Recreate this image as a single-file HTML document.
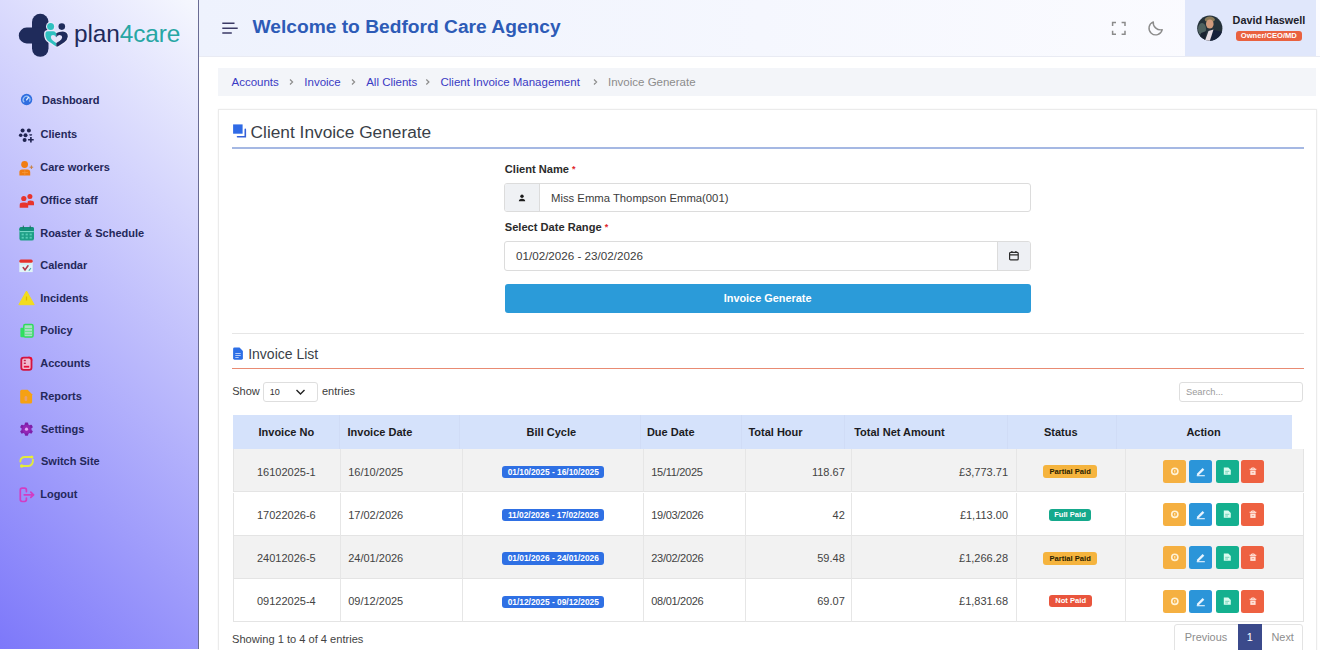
<!DOCTYPE html>
<html><head><meta charset="utf-8">
<style>
*{box-sizing:border-box;margin:0;padding:0}
html,body{width:1320px;height:650px;overflow:hidden;background:#fff;font-family:"Liberation Sans",sans-serif;position:relative}
.a{position:absolute}
.t{position:absolute;line-height:1;white-space:nowrap}
#side{left:0;top:0;width:199px;height:649px;background:linear-gradient(43.3deg,rgb(125,120,250) 0%,rgb(246,248,254) 100%);border-right:1px solid #6a6c94}
.nav{font-size:11px;font-weight:bold;color:#24285a}
#hdr{left:199px;top:0;width:1121px;height:57px;background:linear-gradient(90deg,#eef2fd,#fcfcff);border-bottom:1px solid #e9ebf3}
#prof{left:1185px;top:0;width:131px;height:56px;background:#e0e7fb}
#bc{left:217.5px;top:68.2px;width:1098px;height:27.6px;background:#f3f5f9}
.bcl{font-size:11.5px;color:#3a3ac4}
.chev{font-size:11px;color:#8a8a8a}
#card{left:218px;top:109px;width:1099px;height:560px;border:1px solid #ebebeb;background:#fff;box-shadow:0 0 2px rgba(0,0,0,0.05)}
.lbl{font-size:11.1px;font-weight:bold;color:#2b2b2b}
.req{color:#e0262b;font-size:9px;position:relative;top:-1px}
.inp{border:1px solid #dcdcdc;border-radius:3px;background:#fff}
.th{font-size:11px;font-weight:bold;color:#1b1b22}
.td{font-size:11px;color:#434343}
.bdg{border-radius:3px;color:#fff;font-weight:bold;text-align:center;line-height:12.5px}
.btn{border-radius:2.5px;width:23px;height:23px}
</style></head><body>
<!-- SIDEBAR -->
<div id="side" class="a"></div>
<svg class="a" style="left:0;top:0" width="199" height="70" viewBox="0 0 199 70">
 <rect x="32" y="13.8" width="16.5" height="43" rx="8.2" fill="#1f2b5b"/>
 <rect x="18.8" y="27.6" width="30" height="15.8" rx="7.9" fill="#1f2b5b"/>
 <defs><clipPath id="hl"><rect x="40" y="20" width="16.3" height="30"/></clipPath><clipPath id="hr"><rect x="56.3" y="20" width="16" height="30"/></clipPath></defs>
 <path id="ht" d="M45.4,33.6 Q45.4,31.3 47.8,31.3 L53.3,31.3 Q55.4,31.3 56.1,33.3 Q58.8,31.4 62.8,31.4 Q67.8,31.6 67.8,36.6 Q67.6,39.8 64.3,42.2 L58.6,46 Q57,47 55.4,46 L49.2,41.8 Q45.4,39 45.4,35.2 Z" fill="#e9e8fc" stroke="#e9e8fc" stroke-width="2.6"/>
 <g clip-path="url(#hl)"><path d="M45.4,33.6 Q45.4,31.3 47.8,31.3 L53.3,31.3 Q55.4,31.3 56.1,33.3 Q58.8,31.4 62.8,31.4 Q67.8,31.6 67.8,36.6 Q67.6,39.8 64.3,42.2 L58.6,46 Q57,47 55.4,46 L49.2,41.8 Q45.4,39 45.4,35.2 Z" fill="#2fc0c0"/></g>
 <g clip-path="url(#hr)"><path d="M45.4,33.6 Q45.4,31.3 47.8,31.3 L53.3,31.3 Q55.4,31.3 56.1,33.3 Q58.8,31.4 62.8,31.4 Q67.8,31.6 67.8,36.6 Q67.6,39.8 64.3,42.2 L58.6,46 Q57,47 55.4,46 L49.2,41.8 Q45.4,39 45.4,35.2 Z" fill="#1f2b5b"/></g>
 <path d="M56.2,43.1 L53,40.8 Q50.8,39.2 50.8,37 Q50.9,34.9 53,34.9 Q55,34.9 56.2,37.2 Q57.6,34.9 59.8,34.9 Q62.2,35.1 62.2,37.3 Q62,39.4 59.6,40.9 Z" fill="#e6e4fb"/>
 <circle cx="50.6" cy="26.4" r="4.6" fill="#e9e8fc"/>
 <circle cx="50.6" cy="26.4" r="3.5" fill="#2fc0c0"/>
 <circle cx="61.8" cy="26.6" r="3.3" fill="#1f2b5b"/>
</svg>
<div class="t" style="left:74px;top:21.5px;font-size:24.4px;color:#1f2b5b;letter-spacing:-0.1px">plan<span style="color:#27a6a4">4care</span></div>

<!-- nav icons -->
<svg class="a" style="left:0;top:80px" width="40" height="440" viewBox="0 80 40 440">
 <!-- dashboard -->
 <circle cx="26.6" cy="99.5" r="5.7" fill="#2f6ee0"/>
 <path d="M24.2,102.2 A3.4,3.4 0 1 1 29.4,101.6" fill="none" stroke="#9cc3f6" stroke-width="1.2"/>
 <path d="M26.6,99.9 L28.4,97.5" stroke="#e0efff" stroke-width="1.3" stroke-linecap="round"/>
 <!-- clients -->
 <g fill="#1f2350">
  <circle cx="22.6" cy="130.4" r="2"/><circle cx="28.9" cy="130.4" r="2"/>
  <circle cx="20.7" cy="135.3" r="1.8"/><circle cx="25.5" cy="135.3" r="2"/><path d="M29.2,134.3 A1.5,1.5 0 0 0 32.2,134.3 Z"/>
  <circle cx="24.6" cy="139.9" r="2"/>
 </g>
 <path d="M30.9,136.9 V142.5 M28.1,139.7 H33.7" stroke="#1f2350" stroke-width="1.6"/>
 <!-- care workers -->
 <g fill="#f07d12">
  <circle cx="24.6" cy="164.5" r="3.4"/>
  <path d="M19.4,175.6 V172 Q19.4,169.4 22.2,169.4 H27.4 Q30.2,169.4 30.2,172 V175.6 Z"/>
 </g>
 <path d="M22,172.5 H28 M24.8,169.6 V175.5" stroke="#f59a40" stroke-width="0.7"/>
 <path d="M31.4,165.4 V169 M29.6,167.2 H33.2" stroke="#c88040" stroke-width="1"/>
 <!-- office staff -->
 <g fill="#e8342c">
  <circle cx="29.9" cy="196.4" r="2.5"/>
  <path d="M27.5,205.3 V202.6 Q27.5,200.4 30.3,200.4 Q34,200.4 34,202.8 V205.3 Z"/>
  <circle cx="23.8" cy="198.5" r="2.6"/>
  <path d="M19.7,207.8 V205 Q19.7,202.6 23,202.6 H25 Q28.2,202.6 28.2,205 V207.8 Z"/>
 </g>
 <!-- roaster -->
 <rect x="19.4" y="227" width="14.6" height="13.6" rx="2.2" fill="#1e9e86"/>
 <rect x="19.4" y="227" width="14.6" height="4" rx="1.8" fill="#13907a"/>
 <path d="M19.6,231.6 H33.8" stroke="#7fdccb" stroke-width="1"/>
 <path d="M23.3,225.6 V228.4 M30.2,225.6 V228.4" stroke="#2a6a60" stroke-width="1"/>
 <g fill="#56cdb4"><rect x="21.6" y="233.6" width="2.2" height="1.8"/><rect x="25.6" y="233.6" width="2.2" height="1.8"/><rect x="29.6" y="233.6" width="2.2" height="1.8"/><rect x="21.6" y="236.8" width="2.2" height="1.8"/><rect x="25.6" y="236.8" width="2.2" height="1.8"/><rect x="29.6" y="236.8" width="2.2" height="1.8"/></g>
 <!-- calendar -->
 <rect x="19.3" y="261.5" width="13.4" height="10.6" fill="#e2f5f8"/>
 <rect x="19.3" y="259.4" width="13.4" height="3.4" rx="1.5" fill="#e4322c"/>
 <path d="M23.2,267.6 L25,270 L28,265.8" fill="none" stroke="#b23a4a" stroke-width="1.6" stroke-linecap="round"/>
 <path d="M28.8,270.6 L31,268.2" stroke="#4aa8b0" stroke-width="1.1"/>
 <path d="M20.5,264 H31.5" stroke="#bfe6ee" stroke-width="0.8"/>
 <!-- incidents -->
 <path d="M26.5,291 L34.2,304.7 H18.9 Z" fill="#f2dc1e" stroke="#f2dc1e" stroke-width="1" stroke-linejoin="round"/>
 <path d="M26.5,296.5 V300.5" stroke="#e0b800" stroke-width="1.2"/>
 <!-- policy -->
 <rect x="20.4" y="327.8" width="4" height="9.4" rx="1" fill="#2fe060"/>
 <rect x="23.8" y="324.6" width="9.2" height="12.4" rx="1.3" fill="#a9e0c6" stroke="#2fdc5c" stroke-width="1.5"/>
 <path d="M24.5,328.5 H32.3 M24.5,331.4 H32.3 M24.5,334.3 H32.3" stroke="#59e27e" stroke-width="0.9"/>
 <!-- accounts -->
 <rect x="21.3" y="357.6" width="10.2" height="12.2" rx="2.4" fill="#f2b9cf" stroke="#d3133f" stroke-width="1.8"/>
 <path d="M28.2,356.8 H29.5 Q32.2,356.8 32.2,359.5 V361 Z" fill="#ee0a30"/>
 <g fill="#c5204a"><rect x="23.8" y="359.8" width="2" height="1.4"/><rect x="23.8" y="362.6" width="2" height="1.4"/></g>
 <rect x="23.8" y="365.8" width="5.4" height="1.8" fill="#e8103a"/>
 <!-- reports -->
 <path d="M21.8,389.7 H27.6 L32.1,394.3 V402 Q32.1,403.6 30.5,403.6 H21.8 Q20.2,403.6 20.2,402 V391.3 Q20.2,389.7 21.8,389.7 Z" fill="#f5a114"/>
 <rect x="24.6" y="396" width="2.6" height="5" rx="1.3" fill="#e8a070"/>
 <!-- settings -->
 <g transform="translate(26.5,429.2)">
  <circle r="5" fill="#8e22b0"/>
  <g fill="#7e1fa8"><rect x="-1.7" y="-6.6" width="3.4" height="13.2" rx="0.8"/><rect x="-1.7" y="-6.6" width="3.4" height="13.2" rx="0.8" transform="rotate(60)"/><rect x="-1.7" y="-6.6" width="3.4" height="13.2" rx="0.8" transform="rotate(120)"/></g>
  <circle r="4.2" fill="#9326b6"/>
  <circle r="1.6" fill="#e2a6fa"/>
 </g>
 <!-- switch site -->
 <g fill="none" stroke="#e2ea3e" stroke-width="1.9" stroke-linecap="round">
  <path d="M20.4,461.6 Q20.4,457 25,457 H31.6"/>
  <path d="M33,459.6 Q33,466 28.4,466 H21.8"/>
 </g>
 <circle cx="31.8" cy="457" r="1.6" fill="#e8f030"/><circle cx="21.7" cy="466" r="1.7" fill="#e8f030"/>
 <!-- logout -->
 <g fill="none" stroke="#d23cc4" stroke-width="1.7" stroke-linecap="round" stroke-linejoin="round">
  <path d="M26.4,491.6 V490.2 Q26.4,488.2 24.5,488.2 H22.2 Q20.3,488.2 20.3,490.2 V499.6 Q20.3,501.5 22.2,501.5 H24.5 Q26.4,501.5 26.4,499.6 V498"/>
  <path d="M24.2,494.8 H33.4 M30.8,492.2 L33.6,494.8 L30.8,497.4"/>
 </g>
</svg>

<div class="t nav" style="left:42px;top:94.6px">Dashboard</div>
<div class="t nav" style="left:40.5px;top:129.2px">Clients</div>
<div class="t nav" style="left:40.2px;top:162.3px">Care workers</div>
<div class="t nav" style="left:40.2px;top:195px">Office staff</div>
<div class="t nav" style="left:40.2px;top:227.7px">Roaster &amp; Schedule</div>
<div class="t nav" style="left:40.2px;top:260.1px">Calendar</div>
<div class="t nav" style="left:40.2px;top:292.8px">Incidents</div>
<div class="t nav" style="left:40.2px;top:325.2px">Policy</div>
<div class="t nav" style="left:40.2px;top:357.8px">Accounts</div>
<div class="t nav" style="left:40.2px;top:390.8px">Reports</div>
<div class="t nav" style="left:41px;top:423.5px">Settings</div>
<div class="t nav" style="left:41px;top:455.9px">Switch Site</div>
<div class="t nav" style="left:40.2px;top:488.6px">Logout</div>
<!-- HEADER -->
<div id="hdr" class="a"></div>
<svg class="a" style="left:220px;top:20px" width="20" height="16" viewBox="220 20 20 16">
 <path d="M222.3,23.2 H234.5 M222.3,28.2 H237.7 M222.3,33 H231.8" stroke="#3b3a66" stroke-width="1.6"/>
</svg>
<div class="t" style="left:252.5px;top:17.2px;font-size:19.2px;font-weight:bold;color:#2d5bb7">Welcome to Bedford Care Agency</div>
<svg class="a" style="left:1108px;top:18px" width="60" height="20" viewBox="1108 18 60 20">
 <path d="M1112.6,26 V22.6 H1116 M1121.6,22.6 H1125 V26 M1125,30.8 V34.2 H1121.6 M1116,34.2 H1112.6 V30.8" fill="none" stroke="#8b8b8b" stroke-width="1.5"/>
 <path d="M1153.3,21.9 A6.7,6.7 0 1 0 1162.2,29.8 C1157,30.6 1152.6,26.5 1153.3,21.9 Z" fill="none" stroke="#8b8b8b" stroke-width="1.4" stroke-linejoin="round"/>
</svg>
<div id="prof" class="a"></div>
<svg class="a" style="left:1196px;top:14px" width="28" height="28" viewBox="1196 14 28 28">
 <defs><clipPath id="cc"><circle cx="1209.8" cy="28.2" r="12.6"/></clipPath></defs>
 <circle cx="1209.8" cy="28.2" r="12.6" fill="#25323a"/>
 <g clip-path="url(#cc)">
  <ellipse cx="1202" cy="29" rx="4" ry="6" fill="#5a6e6a" opacity="0.8"/>
  <ellipse cx="1209.8" cy="19.5" rx="5" ry="3" fill="#8a7a58"/>
  <ellipse cx="1209.8" cy="24" rx="3.8" ry="4.6" fill="#d09a7c"/>
  <path d="M1211,29.5 L1223,32 L1223,42 L1208,42 Z" fill="#17213a"/>
  <path d="M1204.5,42 L1208.5,31 L1213.5,29.5 L1209.5,42 Z" fill="#e6dce2"/>
  <path d="M1198,42 L1201,33 L1206.5,31 L1204.5,42 Z" fill="#1a2230"/>
 </g>
</svg>
<div class="t" style="left:1232.6px;top:15.3px;font-size:10.8px;font-weight:bold;color:#1d1d2a">David Haswell</div>
<div class="a bdg" style="left:1235.6px;top:30.8px;width:66.4px;height:10.6px;background:#e9613f;font-size:7.6px;line-height:10.6px">Owner/CEO/MD</div>

<!-- BREADCRUMB -->
<div id="bc" class="a"></div>
<div class="t bcl" style="left:231.5px;top:76.9px">Accounts</div>
<div class="t bcl" style="left:304.3px;top:76.9px">Invoice</div>
<div class="t bcl" style="left:366.2px;top:76.9px">All Clients</div>
<div class="t bcl" style="left:440.5px;top:76.9px">Client Invoice Management</div>
<div class="t bcl" style="left:608px;top:76.9px;color:#8c8c8c">Invoice Generate</div>
<svg class="a" style="left:280px;top:70px" width="330" height="24" viewBox="280 70 330 24">
 <path d="M290,79.5 L292.6,82 L290,84.5 M352,79.5 L354.6,82 L352,84.5 M426.3,79.5 L428.9,82 L426.3,84.5 M594,79.5 L596.6,82 L594,84.5" fill="none" stroke="#8d8d8d" stroke-width="1.2"/>
</svg>
<!-- CARD -->
<div id="card" class="a"></div>
<svg class="a" style="left:232px;top:122px" width="16" height="17" viewBox="232 122 16 17">
 <rect x="233.1" y="124.4" width="9.5" height="9.3" fill="#2f6ae6"/>
 <path d="M245.3,129.4 V136.8 H237.5" fill="none" stroke="#3560d8" stroke-width="1.6" stroke-linecap="round"/>
</svg>
<div class="t" style="left:250.6px;top:123.9px;font-size:17.3px;color:#3a3f48">Client Invoice Generate</div>
<div class="a" style="left:232px;top:147px;width:1072px;height:2px;background:#a5b8e3"></div>

<div class="t lbl" style="left:504.8px;top:163.5px">Client Name <span class="req">*</span></div>
<div class="a inp" style="left:504.2px;top:183.3px;width:526.4px;height:29px"></div>
<div class="a" style="left:505.2px;top:184.3px;width:34.4px;height:27px;background:#eff1f4;border-right:1px solid #dcdcdc;border-radius:2px 0 0 2px"></div>
<svg class="a" style="left:517px;top:193px" width="10" height="10" viewBox="0 0 10 10">
 <circle cx="5" cy="3.2" r="1.7" fill="#1d1d1d"/>
 <path d="M1.8,8.2 Q1.8,5.7 5,5.7 Q8.2,5.7 8.2,8.2 Z" fill="#1d1d1d"/>
</svg>
<div class="t" style="left:551px;top:192.9px;font-size:11.3px;color:#3c3c3c">Miss Emma Thompson Emma(001)</div>

<div class="t lbl" style="left:504.8px;top:221.6px">Select Date Range <span class="req">*</span></div>
<div class="a inp" style="left:504.4px;top:241.2px;width:526.2px;height:29.5px"></div>
<div class="a" style="left:996.5px;top:242.2px;width:33.1px;height:27.5px;background:#eef0f4;border-left:1px solid #dcdcdc;border-radius:0 2px 2px 0"></div>
<svg class="a" style="left:1008px;top:250px" width="12" height="12" viewBox="0 0 12 12">
 <rect x="1.6" y="2.3" width="8.6" height="7.6" rx="1" fill="none" stroke="#2b2b2b" stroke-width="1.2"/>
 <path d="M1.6,4.8 H10.2 M3.9,1 V3 M7.9,1 V3" stroke="#2b2b2b" stroke-width="1.2"/>
</svg>
<div class="t" style="left:516px;top:250.1px;font-size:11.65px;color:#3c3c3c">01/02/2026 - 23/02/2026</div>

<div class="a" style="left:504.6px;top:284.1px;width:526px;height:29.1px;background:#2b9bd9;border-radius:3px"></div>
<div class="t" style="left:504.6px;width:526px;text-align:center;top:293.3px;font-size:10.9px;font-weight:bold;color:#fff">Invoice Generate</div>

<div class="a" style="left:232px;top:332.5px;width:1072px;height:1px;background:#e6e6e6"></div>
<svg class="a" style="left:232px;top:346px" width="12" height="15" viewBox="232 346 12 15">
 <path d="M234.5,347.5 H239.5 L242.9,350.9 V358.3 Q242.9,359.7 241.5,359.7 H234.5 Q233.1,359.7 233.1,358.3 V348.9 Q233.1,347.5 234.5,347.5 Z" fill="#2d6fe6"/>
 <path d="M235.3,353.5 H240.7 M235.3,355.5 H240.7 M235.3,357.5 H238.7" stroke="#c5d7fa" stroke-width="0.9"/>
</svg>
<div class="t" style="left:248.2px;top:346.9px;font-size:14px;color:#3a3f48">Invoice List</div>
<div class="a" style="left:232px;top:367.8px;width:1072px;height:1.2px;background:#e98b73"></div>

<div class="t" style="left:232.2px;top:385.7px;font-size:11px;color:#3c3c3c">Show</div>
<div class="a inp" style="left:262.8px;top:381.5px;width:55.7px;height:20.7px;border-color:#dedede"></div>
<div class="t" style="left:269.7px;top:388.2px;font-size:9px;color:#333">10</div>
<svg class="a" style="left:295px;top:388px" width="11" height="8" viewBox="0 0 11 8">
 <path d="M1.5,2 L5.5,6 L9.5,2" fill="none" stroke="#222" stroke-width="1.4"/>
</svg>
<div class="t" style="left:322px;top:385.7px;font-size:11px;color:#3c3c3c">entries</div>
<div class="a inp" style="left:1179.4px;top:381.8px;width:124px;height:20.7px;border-color:#dedede"></div>
<div class="t" style="left:1186px;top:388px;font-size:9.3px;color:#9a9a9a">Search...</div>
<div class="a" style="left:232.5px;top:414.5px;width:1059px;height:35px;background:#d5e2fb"></div>
<div class="a" style="left:339.2px;top:414.5px;width:1px;height:35px;background:#d0dcf6"></div>
<div class="a" style="left:459.4px;top:414.5px;width:1px;height:35px;background:#d0dcf6"></div>
<div class="a" style="left:639.5px;top:414.5px;width:1px;height:35px;background:#d0dcf6"></div>
<div class="a" style="left:741.4px;top:414.5px;width:1px;height:35px;background:#d0dcf6"></div>
<div class="a" style="left:843.8px;top:414.5px;width:1px;height:35px;background:#d0dcf6"></div>
<div class="a" style="left:1007.3px;top:414.5px;width:1px;height:35px;background:#d0dcf6"></div>
<div class="a" style="left:1115.9px;top:414.5px;width:1px;height:35px;background:#d0dcf6"></div>
<div class="t th" style="left:258.5px;top:427.29px">Invoice No</div>
<div class="t th" style="left:347.5px;top:427.29px">Invoice Date</div>
<div class="t th" style="left:526.6px;top:427.29px">Bill Cycle</div>
<div class="t th" style="left:646.9px;top:427.29px">Due Date</div>
<div class="t th" style="left:748.4px;top:427.29px">Total Hour</div>
<div class="t th" style="left:854.2px;top:427.29px">Total Net Amount</div>
<div class="t th" style="left:1044px;top:427.29px">Status</div>
<div class="t th" style="left:1186.4px;top:427.29px">Action</div>
<div class="a" style="left:232.5px;top:449.3px;width:1071px;height:43.2px;background:#f2f2f2;border-bottom:1px solid #e4e4e4;border-left:1px solid #e4e4e4;border-right:1px solid #e4e4e4"></div>
<div class="a" style="left:340.2px;top:449.3px;width:1px;height:43.2px;background:#e6e6e6"></div>
<div class="a" style="left:462.3px;top:449.3px;width:1px;height:43.2px;background:#e6e6e6"></div>
<div class="a" style="left:642.7px;top:449.3px;width:1px;height:43.2px;background:#e6e6e6"></div>
<div class="a" style="left:745.2px;top:449.3px;width:1px;height:43.2px;background:#e6e6e6"></div>
<div class="a" style="left:851px;top:449.3px;width:1px;height:43.2px;background:#e6e6e6"></div>
<div class="a" style="left:1016.2px;top:449.3px;width:1px;height:43.2px;background:#e6e6e6"></div>
<div class="a" style="left:1124.8px;top:449.3px;width:1px;height:43.2px;background:#e6e6e6"></div>
<div class="t td" style="left:232.5px;width:107.7px;text-align:center;top:466.89px">16102025-1</div>
<div class="t td" style="left:348.2px;top:466.89px">16/10/2025</div>
<div class="a bdg" style="left:502.1px;top:465.9px;width:102.4px;height:12.4px;background:#2f70e4;font-size:8.4px;line-height:12.4px">01/10/2025 - 16/10/2025</div>
<div class="t td" style="left:651.3px;letter-spacing:-0.3px;top:466.89px">15/11/2025</div>
<div class="t td" style="left:745.2px;width:99.6px;text-align:right;top:466.89px">118.67</div>
<div class="t td" style="left:851px;width:157px;text-align:right;top:466.89px">£3,773.71</div>
<div class="a bdg" style="left:1043px;top:465.3px;width:54.3px;height:13px;background:#f5b43e;color:#2a1e00;font-size:7.6px;line-height:13px">Partial Paid</div>
<div class="a btn" style="left:1163.2px;top:460.0px;background:#f5b041"></div>
<div class="a btn" style="left:1189.1px;top:460.0px;background:#2b95d9"></div>
<div class="a btn" style="left:1215.5px;top:460.0px;background:#14b08f"></div>
<div class="a btn" style="left:1240.9px;top:460.0px;background:#ee6141"></div>
<svg class="a" style="left:1160px;top:460.0px" width="110" height="23" viewBox="1160 0 110 23"><circle cx="1174.8" cy="11.3" r="3.1" fill="none" stroke="#fff2d6" stroke-width="1.6"/><path d="M1174.8,10 V12.6" stroke="#fff2d6" stroke-width="1"/><path d="M1197.2,13.4 L1202.6,8 L1204.3,9.7 L1198.9,15.1 L1196.8,15.4 Z" fill="#e8f4ff"/><path d="M1196.8,15.7 H1204.8" stroke="#e8f4ff" stroke-width="1.1"/><path d="M1223.8,7.6 H1228.3 L1230.8,10.1 V14.7 H1223.8 Z" fill="#d8fbef"/><path d="M1225.2,11.3 H1229.3 M1225.2,13 H1228" stroke="#5fc9ad" stroke-width="0.8"/><path d="M1249.6,9.3 H1256.3" stroke="#ffe5dc" stroke-width="1.2"/><path d="M1251.6,9 V8 H1254.3 V9" fill="none" stroke="#ffe5dc" stroke-width="1"/><path d="M1250.3,10.5 H1255.6 V14.9 H1250.3 Z" fill="#ffe5dc"/><path d="M1251.8,12.7 H1254.1" stroke="#ee8a70" stroke-width="0.8"/></svg>
<div class="a" style="left:232.5px;top:492.5px;width:1071px;height:43.2px;background:#fff;border-bottom:1px solid #e4e4e4;border-left:1px solid #e4e4e4;border-right:1px solid #e4e4e4"></div>
<div class="a" style="left:340.2px;top:492.5px;width:1px;height:43.2px;background:#e6e6e6"></div>
<div class="a" style="left:462.3px;top:492.5px;width:1px;height:43.2px;background:#e6e6e6"></div>
<div class="a" style="left:642.7px;top:492.5px;width:1px;height:43.2px;background:#e6e6e6"></div>
<div class="a" style="left:745.2px;top:492.5px;width:1px;height:43.2px;background:#e6e6e6"></div>
<div class="a" style="left:851px;top:492.5px;width:1px;height:43.2px;background:#e6e6e6"></div>
<div class="a" style="left:1016.2px;top:492.5px;width:1px;height:43.2px;background:#e6e6e6"></div>
<div class="a" style="left:1124.8px;top:492.5px;width:1px;height:43.2px;background:#e6e6e6"></div>
<div class="t td" style="left:232.5px;width:107.7px;text-align:center;top:510.09px">17022026-6</div>
<div class="t td" style="left:348.2px;top:510.09px">17/02/2026</div>
<div class="a bdg" style="left:502.1px;top:509.1px;width:102.4px;height:12.4px;background:#2f70e4;font-size:8.4px;line-height:12.4px">11/02/2026 - 17/02/2026</div>
<div class="t td" style="left:651.3px;letter-spacing:-0.3px;top:510.09px">19/03/2026</div>
<div class="t td" style="left:745.2px;width:99.6px;text-align:right;top:510.09px">42</div>
<div class="t td" style="left:851px;width:157px;text-align:right;top:510.09px">£1,113.00</div>
<div class="a bdg" style="left:1049.3px;top:508.8px;width:41.4px;height:12px;background:#15a98c;font-size:7.6px;line-height:12px">Full Paid</div>
<div class="a btn" style="left:1163.2px;top:503.2px;background:#f5b041"></div>
<div class="a btn" style="left:1189.1px;top:503.2px;background:#2b95d9"></div>
<div class="a btn" style="left:1215.5px;top:503.2px;background:#14b08f"></div>
<div class="a btn" style="left:1240.9px;top:503.2px;background:#ee6141"></div>
<svg class="a" style="left:1160px;top:503.2px" width="110" height="23" viewBox="1160 0 110 23"><circle cx="1174.8" cy="11.3" r="3.1" fill="none" stroke="#fff2d6" stroke-width="1.6"/><path d="M1174.8,10 V12.6" stroke="#fff2d6" stroke-width="1"/><path d="M1197.2,13.4 L1202.6,8 L1204.3,9.7 L1198.9,15.1 L1196.8,15.4 Z" fill="#e8f4ff"/><path d="M1196.8,15.7 H1204.8" stroke="#e8f4ff" stroke-width="1.1"/><path d="M1223.8,7.6 H1228.3 L1230.8,10.1 V14.7 H1223.8 Z" fill="#d8fbef"/><path d="M1225.2,11.3 H1229.3 M1225.2,13 H1228" stroke="#5fc9ad" stroke-width="0.8"/><path d="M1249.6,9.3 H1256.3" stroke="#ffe5dc" stroke-width="1.2"/><path d="M1251.6,9 V8 H1254.3 V9" fill="none" stroke="#ffe5dc" stroke-width="1"/><path d="M1250.3,10.5 H1255.6 V14.9 H1250.3 Z" fill="#ffe5dc"/><path d="M1251.8,12.7 H1254.1" stroke="#ee8a70" stroke-width="0.8"/></svg>
<div class="a" style="left:232.5px;top:535.7px;width:1071px;height:43.2px;background:#f2f2f2;border-bottom:1px solid #e4e4e4;border-left:1px solid #e4e4e4;border-right:1px solid #e4e4e4"></div>
<div class="a" style="left:340.2px;top:535.7px;width:1px;height:43.2px;background:#e6e6e6"></div>
<div class="a" style="left:462.3px;top:535.7px;width:1px;height:43.2px;background:#e6e6e6"></div>
<div class="a" style="left:642.7px;top:535.7px;width:1px;height:43.2px;background:#e6e6e6"></div>
<div class="a" style="left:745.2px;top:535.7px;width:1px;height:43.2px;background:#e6e6e6"></div>
<div class="a" style="left:851px;top:535.7px;width:1px;height:43.2px;background:#e6e6e6"></div>
<div class="a" style="left:1016.2px;top:535.7px;width:1px;height:43.2px;background:#e6e6e6"></div>
<div class="a" style="left:1124.8px;top:535.7px;width:1px;height:43.2px;background:#e6e6e6"></div>
<div class="t td" style="left:232.5px;width:107.7px;text-align:center;top:553.29px">24012026-5</div>
<div class="t td" style="left:348.2px;top:553.29px">24/01/2026</div>
<div class="a bdg" style="left:502.1px;top:552.3px;width:102.4px;height:12.4px;background:#2f70e4;font-size:8.4px;line-height:12.4px">01/01/2026 - 24/01/2026</div>
<div class="t td" style="left:651.3px;letter-spacing:-0.3px;top:553.29px">23/02/2026</div>
<div class="t td" style="left:745.2px;width:99.6px;text-align:right;top:553.29px">59.48</div>
<div class="t td" style="left:851px;width:157px;text-align:right;top:553.29px">£1,266.28</div>
<div class="a bdg" style="left:1043px;top:551.7px;width:54.3px;height:13px;background:#f5b43e;color:#2a1e00;font-size:7.6px;line-height:13px">Partial Paid</div>
<div class="a btn" style="left:1163.2px;top:546.4px;background:#f5b041"></div>
<div class="a btn" style="left:1189.1px;top:546.4px;background:#2b95d9"></div>
<div class="a btn" style="left:1215.5px;top:546.4px;background:#14b08f"></div>
<div class="a btn" style="left:1240.9px;top:546.4px;background:#ee6141"></div>
<svg class="a" style="left:1160px;top:546.4px" width="110" height="23" viewBox="1160 0 110 23"><circle cx="1174.8" cy="11.3" r="3.1" fill="none" stroke="#fff2d6" stroke-width="1.6"/><path d="M1174.8,10 V12.6" stroke="#fff2d6" stroke-width="1"/><path d="M1197.2,13.4 L1202.6,8 L1204.3,9.7 L1198.9,15.1 L1196.8,15.4 Z" fill="#e8f4ff"/><path d="M1196.8,15.7 H1204.8" stroke="#e8f4ff" stroke-width="1.1"/><path d="M1223.8,7.6 H1228.3 L1230.8,10.1 V14.7 H1223.8 Z" fill="#d8fbef"/><path d="M1225.2,11.3 H1229.3 M1225.2,13 H1228" stroke="#5fc9ad" stroke-width="0.8"/><path d="M1249.6,9.3 H1256.3" stroke="#ffe5dc" stroke-width="1.2"/><path d="M1251.6,9 V8 H1254.3 V9" fill="none" stroke="#ffe5dc" stroke-width="1"/><path d="M1250.3,10.5 H1255.6 V14.9 H1250.3 Z" fill="#ffe5dc"/><path d="M1251.8,12.7 H1254.1" stroke="#ee8a70" stroke-width="0.8"/></svg>
<div class="a" style="left:232.5px;top:578.9px;width:1071px;height:43.2px;background:#fff;border-bottom:1px solid #e4e4e4;border-left:1px solid #e4e4e4;border-right:1px solid #e4e4e4"></div>
<div class="a" style="left:340.2px;top:578.9px;width:1px;height:43.2px;background:#e6e6e6"></div>
<div class="a" style="left:462.3px;top:578.9px;width:1px;height:43.2px;background:#e6e6e6"></div>
<div class="a" style="left:642.7px;top:578.9px;width:1px;height:43.2px;background:#e6e6e6"></div>
<div class="a" style="left:745.2px;top:578.9px;width:1px;height:43.2px;background:#e6e6e6"></div>
<div class="a" style="left:851px;top:578.9px;width:1px;height:43.2px;background:#e6e6e6"></div>
<div class="a" style="left:1016.2px;top:578.9px;width:1px;height:43.2px;background:#e6e6e6"></div>
<div class="a" style="left:1124.8px;top:578.9px;width:1px;height:43.2px;background:#e6e6e6"></div>
<div class="t td" style="left:232.5px;width:107.7px;text-align:center;top:596.49px">09122025-4</div>
<div class="t td" style="left:348.2px;top:596.49px">09/12/2025</div>
<div class="a bdg" style="left:502.1px;top:595.5px;width:102.4px;height:12.4px;background:#2f70e4;font-size:8.4px;line-height:12.4px">01/12/2025 - 09/12/2025</div>
<div class="t td" style="left:651.3px;letter-spacing:-0.3px;top:596.49px">08/01/2026</div>
<div class="t td" style="left:745.2px;width:99.6px;text-align:right;top:596.49px">69.07</div>
<div class="t td" style="left:851px;width:157px;text-align:right;top:596.49px">£1,831.68</div>
<div class="a bdg" style="left:1049.3px;top:595.2px;width:42.7px;height:12px;background:#e9553d;font-size:7.6px;line-height:12px">Not Paid</div>
<div class="a btn" style="left:1163.2px;top:589.6px;background:#f5b041"></div>
<div class="a btn" style="left:1189.1px;top:589.6px;background:#2b95d9"></div>
<div class="a btn" style="left:1215.5px;top:589.6px;background:#14b08f"></div>
<div class="a btn" style="left:1240.9px;top:589.6px;background:#ee6141"></div>
<svg class="a" style="left:1160px;top:589.6px" width="110" height="23" viewBox="1160 0 110 23"><circle cx="1174.8" cy="11.3" r="3.1" fill="none" stroke="#fff2d6" stroke-width="1.6"/><path d="M1174.8,10 V12.6" stroke="#fff2d6" stroke-width="1"/><path d="M1197.2,13.4 L1202.6,8 L1204.3,9.7 L1198.9,15.1 L1196.8,15.4 Z" fill="#e8f4ff"/><path d="M1196.8,15.7 H1204.8" stroke="#e8f4ff" stroke-width="1.1"/><path d="M1223.8,7.6 H1228.3 L1230.8,10.1 V14.7 H1223.8 Z" fill="#d8fbef"/><path d="M1225.2,11.3 H1229.3 M1225.2,13 H1228" stroke="#5fc9ad" stroke-width="0.8"/><path d="M1249.6,9.3 H1256.3" stroke="#ffe5dc" stroke-width="1.2"/><path d="M1251.6,9 V8 H1254.3 V9" fill="none" stroke="#ffe5dc" stroke-width="1"/><path d="M1250.3,10.5 H1255.6 V14.9 H1250.3 Z" fill="#ffe5dc"/><path d="M1251.8,12.7 H1254.1" stroke="#ee8a70" stroke-width="0.8"/></svg>
<div class="t td" style="left:232px;top:634px;font-size:11.1px">Showing 1 to 4 of 4 entries</div>
<div class="a" style="left:1174.3px;top:624.3px;width:128.7px;height:30px;border:1px solid #e3e3e3;border-radius:3px;background:#fff"></div>
<div class="a" style="left:1237.9px;top:624.3px;width:23.7px;height:30px;background:#3b4a8b"></div>
<div class="t" style="left:1184.8px;top:632px;font-size:10.9px;color:#8d8d8d">Previous</div>
<div class="t" style="left:1237.9px;width:23.7px;text-align:center;top:632px;font-size:10.9px;color:#fff">1</div>
<div class="t" style="left:1271.5px;top:632px;font-size:10.9px;color:#8d8d8d">Next</div>
</body></html>
